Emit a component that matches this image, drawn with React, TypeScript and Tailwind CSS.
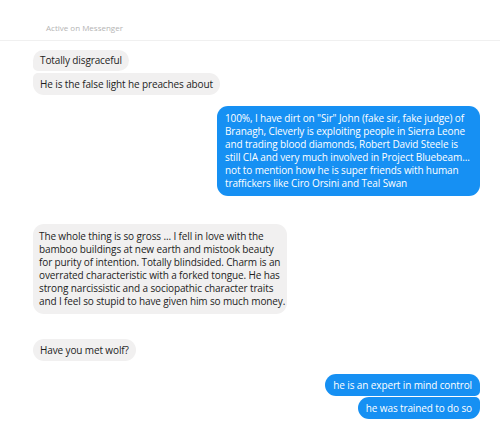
const font = { fontFamily: '"Open Sans", "Liberation Sans", sans-serif' };

type BubbleProps = { children: React.ReactNode; className?: string };

// base classes carry no padding/leading so callers can set them without clashes
const Theirs = ({ children, className = "" }: BubbleProps) => (
  <div className={`self-start bg-[#f1f0f0] text-[#1d1d1d] text-[10px] tracking-[-0.12px] whitespace-nowrap ${className}`}>
    {children}
  </div>
);

const Mine = ({ children, className = "" }: BubbleProps) => (
  <div className={`self-end bg-[#1690f3] text-white text-[10px] tracking-[-0.12px] whitespace-nowrap ${className}`}>
    {children}
  </div>
);

const blueLines = [
  '100%, I have dirt on "Sir" John (fake sir, fake judge) of',
  "Branagh, Cleverly is exploiting people in Sierra Leone",
  "and trading blood diamonds, Robert David Steele is",
  "still CIA and very much involved in Project Bluebeam...",
  "not to mention how he is super friends with human",
  "traffickers like Ciro Orsini and Teal Swan",
];

const grayLines = [
  "The whole thing is so gross ... I fell in love with the",
  "bamboo buildings at new earth and mistook beauty",
  "for purity of intention. Totally blindsided. Charm is an",
  "overrated characteristic with a forked tongue. He has",
  "strong narcissistic and a sociopathic character traits",
  "and I feel so stupid to have given him so much money.",
];

export default function App() {
  return (
    <div className="w-[500px] h-[439px] bg-white overflow-hidden" style={font}>
      <div className="h-[41px] border-b border-[#f0f0f0] pl-[46px] pt-[22px]">
        <p className="text-[8px] leading-[11px] text-[#b4b4b4]">Active on Messenger</p>
      </div>

      <div className="flex flex-col pl-[33px] pr-[20px] pt-[9px]">
        <Theirs className="px-[7px] py-[4px] leading-[13px] rounded-[11px] rounded-bl-[5px]">
          Totally disgraceful
        </Theirs>
        <Theirs className="mt-[2px] px-[7px] py-[4px] leading-[14px] rounded-[11px] rounded-tl-[5px]">
          He is the false light he preaches about
        </Theirs>

        <Mine className="mt-[11px] w-[263px] px-[8px] py-[6px] leading-[13px] rounded-[11px]">
          {blueLines.map((l) => (
            <div key={l}>{l}</div>
          ))}
        </Mine>

        <Theirs className="mt-[28px] w-[254px] px-[6px] py-[6px] leading-[13px] rounded-[11px]">
          {grayLines.map((l) => (
            <div key={l}>{l}</div>
          ))}
        </Theirs>

        <Theirs className="mt-[25px] px-[7px] py-[4px] leading-[14px] rounded-[11px]">Have you met wolf?</Theirs>

        <Mine className="mt-[13px] px-[8px] py-[4px] leading-[14px] rounded-[11px] rounded-br-[5px]">
          he is an expert in mind control
        </Mine>
        <Mine className="mt-[1px] px-[8px] py-[4px] leading-[14px] rounded-[11px] rounded-tr-[5px]">
          he was trained to do so
        </Mine>
      </div>
    </div>
  );
}
